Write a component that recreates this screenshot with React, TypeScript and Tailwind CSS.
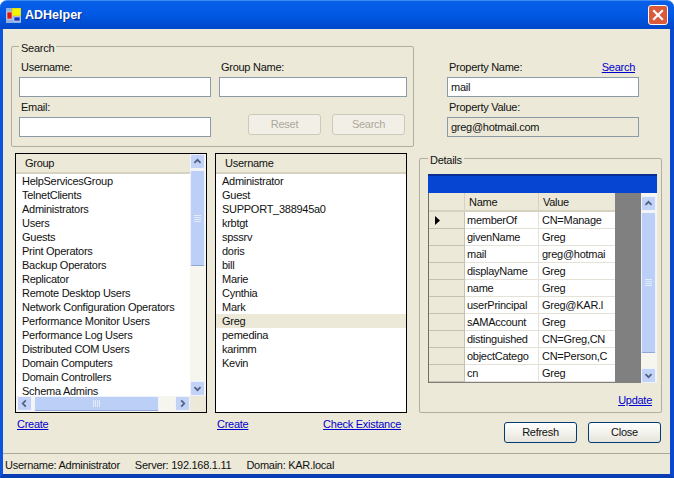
import React from 'react';

const groups = [
  'HelpServicesGroup', 'TelnetClients', 'Administrators', 'Users', 'Guests', 'Print Operators',
  'Backup Operators', 'Replicator', 'Remote Desktop Users', 'Network Configuration Operators',
  'Performance Monitor Users', 'Performance Log Users', 'Distributed COM Users',
  'Domain Computers', 'Domain Controllers', 'Schema Admins',
];

const users = [
  'Administrator', 'Guest', 'SUPPORT_388945a0', 'krbtgt', 'spssrv', 'doris', 'bill', 'Marie',
  'Cynthia', 'Mark', 'Greg', 'pemedina', 'karimm', 'Kevin',
];

const details = [
  ['memberOf', 'CN=Manage'],
  ['givenName', 'Greg'],
  ['mail', 'greg@hotmai'],
  ['displayName', 'Greg'],
  ['name', 'Greg'],
  ['userPrincipal', 'Greg@KAR.l'],
  ['sAMAccount', 'Greg'],
  ['distinguished', 'CN=Greg,CN'],
  ['objectCatego', 'CN=Person,C'],
  ['cn', 'Greg'],
];

// XP style scroll button, the arrow is turned per direction
const ScrollButton = ({ dir }: { dir: 'up' | 'down' | 'left' | 'right' }) => {
  const points = {
    up: '4,9 7.5,5.5 11,9',
    down: '4,6 7.5,9.5 11,6',
    left: '9,4 5.5,7.5 9,11',
    right: '6,4 9.5,7.5 6,11',
  }[dir];
  return (
    <div className="w-[15px] h-[15px] shrink-0 rounded-[2px] border border-[#eef3fd] bg-[#c3d3f7] flex items-center justify-center">
      <svg width="15" height="15" viewBox="0 0 15 15">
        <polyline points={points} fill="none" stroke="#4d6185" strokeWidth="2" />
      </svg>
    </div>
  );
};

const VScroll = ({ thumb, top = 0 }: { thumb: number; top?: number }) => (
  <div className="w-[16px] shrink-0 flex flex-col bg-[#f6f5ee]" style={{ paddingTop: top }}>
    <ScrollButton dir="up" />
    <div className="w-[15px] mt-[1px] rounded-[2px] border border-[#eef3fd] border-b-[#8fa6d6] bg-[#bccff7] flex flex-col items-center justify-center gap-[1px]" style={{ height: thumb }}>
      <div className="w-[7px] h-[1px] bg-[#e4ebfb]" />
      <div className="w-[7px] h-[1px] bg-[#e4ebfb]" />
      <div className="w-[7px] h-[1px] bg-[#e4ebfb]" />
      <div className="w-[7px] h-[1px] bg-[#e4ebfb]" />
    </div>
    <div className="flex-1" />
    <ScrollButton dir="down" />
  </div>
);

const Link = ({ children }: { children: React.ReactNode }) => (
  <a className="text-[#0000cc] underline cursor-pointer">{children}</a>
);

const Field = ({ value, readOnly, width }: { value?: string; readOnly?: boolean; width: string }) => (
  <input
    readOnly
    value={value ?? ''}
    className={`${width} h-[20px] block border border-[#8a9aa6] px-[3px] outline-none ${readOnly ? 'bg-[#ece9d8]' : 'bg-white'}`}
  />
);

const HeaderCell = ({ children, className }: { children?: React.ReactNode; className?: string }) => (
  <div className={`bg-[#ece9d8] border-b-2 border-[#d6d2c2] flex items-center ${className ?? ''}`}>
    {children}
  </div>
);

const App = () => {
  return (
    <div className="w-[674px] h-[478px] flex flex-col overflow-hidden bg-white font-['Liberation_Sans',sans-serif] text-[11px] tracking-[-0.27px] leading-[13px] text-[#111]">
      {/* Title bar */}
      <div className="h-[29px] shrink-0 rounded-t-[7px] bg-gradient-to-b from-[#0a5fe8] via-[#0058e4] to-[#0046c8] border-t border-[#3c8cf3] flex items-center pl-[6px] pr-[6px]">
        <svg width="15" height="15" viewBox="0 0 15 15" className="shrink-0">
          <rect x="0" y="0" width="15" height="15" fill="#8fb0e0" />
          <rect x="6" y="0" width="9" height="8" fill="#f4f400" stroke="#b0a040" strokeWidth="0.5" />
          <rect x="1" y="4" width="5" height="7" fill="#d81818" stroke="#fff" strokeWidth="0.5" />
          <rect x="8" y="9" width="6" height="4" fill="#1830c0" stroke="#fff" strokeWidth="0.5" />
        </svg>
        <span className="ml-[4px] text-white font-bold text-[12.5px] tracking-[0px] [text-shadow:1px_1px_0_#0a2f90]">ADHelper</span>
        <div className="ml-auto w-[20px] h-[20px] rounded-[3px] border border-white bg-[#dc5a3c] flex items-center justify-center">
          <svg width="12" height="12" viewBox="0 0 12 12">
            <path d="M2 2 L10 10 M10 2 L2 10" stroke="#fff" strokeWidth="2.2" strokeLinecap="square" />
          </svg>
        </div>
      </div>

      {/* Window body */}
      <div className="flex-1 min-h-0 flex flex-col bg-[#ece9d8] border-l-[3px] border-l-[#0a55dc] border-r-[4px] border-r-[#0a48cc] border-b-[4px] border-b-[#0a3cb4]">
        <div className="flex-1 flex pl-[8px]">
          {/* Left column */}
          <div className="w-[403px] shrink-0 pt-[9px]">
            <fieldset className="h-[109px] border border-[#b0ae9e] pl-[7px] rounded-[2px]">
              <legend className="px-[2px] pt-[4px] leading-[13px]">Search</legend>
              <div className="pt-[6px] flex gap-[8px]">
                <div>
                  <div className="pl-[2px] mb-[3px]">Username:</div>
                  <Field width="w-[192px]" />
                </div>
                <div>
                  <div className="pl-[2px] mb-[3px]">Group Name:</div>
                  <Field width="w-[188px]" />
                </div>
              </div>
              <div className="mt-[4px] flex">
                <div>
                  <div className="pl-[2px] mb-[3px]">Email:</div>
                  <Field width="w-[192px]" />
                </div>
                <div className="ml-[37px] mt-[13px] flex gap-[11px]">
                  <button className="w-[73px] h-[21px] rounded-[3px] border border-[#cdcabb] bg-[#f2f0e6] text-[#aca899]">Reset</button>
                  <button className="w-[73px] h-[21px] rounded-[3px] border border-[#cdcabb] bg-[#f2f0e6] text-[#aca899]">Search</button>
                </div>
              </div>
            </fieldset>

            <div className="mt-[6px] ml-[4px] flex gap-[8px]">
              {/* Group list */}
              <div className="w-[192px] h-[260px] border border-black bg-white flex">
                <div className="w-[174px] flex flex-col">
                  <HeaderCell className="h-[20px] pl-[9px] shrink-0">Group</HeaderCell>
                  <div className="flex-1 min-h-0 overflow-hidden">
                    {groups.map((g) => (
                      <div key={g} className="h-[14px] pl-[6px] whitespace-nowrap leading-[14px]">{g}</div>
                    ))}
                  </div>
                  <div className="h-[16px] shrink-0 flex bg-[#f6f5ee] pl-[1px]">
                    <ScrollButton dir="left" />
                    <div className="w-[125px] h-[15px] ml-[2px] rounded-[2px] border border-[#eef3fd] border-b-[#8fa6d6] bg-[#bccff7] flex items-center justify-center gap-[1px]">
                      <div className="w-[1px] h-[7px] bg-[#e4ebfb]" />
                      <div className="w-[1px] h-[7px] bg-[#e4ebfb]" />
                      <div className="w-[1px] h-[7px] bg-[#e4ebfb]" />
                      <div className="w-[1px] h-[7px] bg-[#e4ebfb]" />
                    </div>
                    <div className="flex-1" />
                    <ScrollButton dir="right" />
                  </div>
                </div>
                <div className="flex flex-col">
                  <div className="flex-1 flex min-h-0">
                    <VScroll thumb={96} />
                  </div>
                  <div className="h-[16px] shrink-0 bg-[#ece9d8]" />
                </div>
              </div>

              {/* Username list */}
              <div className="w-[192px] h-[260px] border border-black bg-white flex flex-col">
                <HeaderCell className="h-[20px] pl-[9px] shrink-0">Username</HeaderCell>
                {users.map((u) => (
                  <div key={u} className={`h-[14px] pl-[6px] whitespace-nowrap leading-[14px] ${u === 'Greg' ? 'bg-[#ece9d8]' : ''}`}>{u}</div>
                ))}
              </div>
            </div>

            <div className="mt-[5px] ml-[4px] flex gap-[8px]">
              <div className="w-[192px] pl-[2px]"><Link>Create</Link></div>
              <div className="w-[192px] pl-[2px] pr-[6px] flex justify-between">
                <Link>Create</Link>
                <Link>Check Existance</Link>
              </div>
            </div>
          </div>

          {/* Right column */}
          <div className="w-[243px] ml-[5px] shrink-0 pt-[32px]">
            <div className="ml-[28px] w-[192px]">
              <div className="pl-[2px] pr-[4px] mb-[3px] flex justify-between">
                <span>Property Name:</span>
                <Link>Search</Link>
              </div>
              <Field width="w-[192px]" value="mail" />
              <div className="pl-[2px] mt-[4px] mb-[3px]">Property Value:</div>
              <Field width="w-[192px]" value="greg@hotmail.com" readOnly />
            </div>

            <fieldset className="mt-[13px] h-[263px] border border-[#b0ae9e] pl-[8px] pr-[4px] rounded-[2px]">
              <legend className="ml-0 px-[2px] pt-[4px] leading-[13px]">Details</legend>
              <div className="mt-[7px] h-[19px] bg-[#0645d2] border-t-2 border-[#0a2f90]" />
              <div className="h-[190px] flex bg-[#808080]">
                <div className="w-[186px] shrink-0 grid grid-cols-[36px_74px_76px] grid-rows-[19px_repeat(10,17px)] border-l border-[#716f64]">
                  <HeaderCell className="border-r border-[#c4c1b0]" />
                  <HeaderCell className="pl-[4px] pt-[2px] border-r border-[#c4c1b0]">Name</HeaderCell>
                  <HeaderCell className="pl-[4px] pt-[2px]">Value</HeaderCell>
                  {details.map(([name, value], i) => (
                    <React.Fragment key={name}>
                      <div className="bg-[#ece9d8] border-r border-b border-[#c4c1b0] flex items-center pl-[6px]">
                        {i === 0 && (
                          <svg width="6" height="9" viewBox="0 0 6 9">
                            <path d="M0 0 L5 4.5 L0 9 Z" fill="#000" />
                          </svg>
                        )}
                      </div>
                      <div className="bg-white border-r border-b border-[#e4e2d6] pl-[2px] pt-[1px] flex items-center whitespace-nowrap overflow-hidden">{name}</div>
                      <div className="bg-white border-b border-[#e4e2d6] pl-[3px] pt-[1px] flex items-center whitespace-nowrap overflow-hidden">{value}</div>
                    </React.Fragment>
                  ))}
                </div>
                <div className="flex-1" />
                <VScroll thumb={141} top={3} />
              </div>
              <div className="mt-[11px] pr-[5px] flex justify-end">
                <Link>Update</Link>
              </div>
            </fieldset>

            <div className="mt-[9px] pr-[1px] flex justify-end gap-[11px]">
              <button className="w-[73px] h-[21px] rounded-[3px] border border-[#003c74] bg-gradient-to-b from-white to-[#e6e4da] text-[#111]">Refresh</button>
              <button className="w-[73px] h-[21px] rounded-[3px] border border-[#003c74] bg-gradient-to-b from-white to-[#e6e4da] text-[#111]">Close</button>
            </div>
          </div>
        </div>

        {/* Status bar */}
        <div className="h-[21px] shrink-0 border-t border-[#aca899] flex items-center pl-[2px] pt-[2px] gap-[15px]">
          <span>Username: Administrator</span>
          <span>Server: 192.168.1.11</span>
          <span>Domain: KAR.local</span>
        </div>
      </div>
    </div>
  );
};

export default App;
